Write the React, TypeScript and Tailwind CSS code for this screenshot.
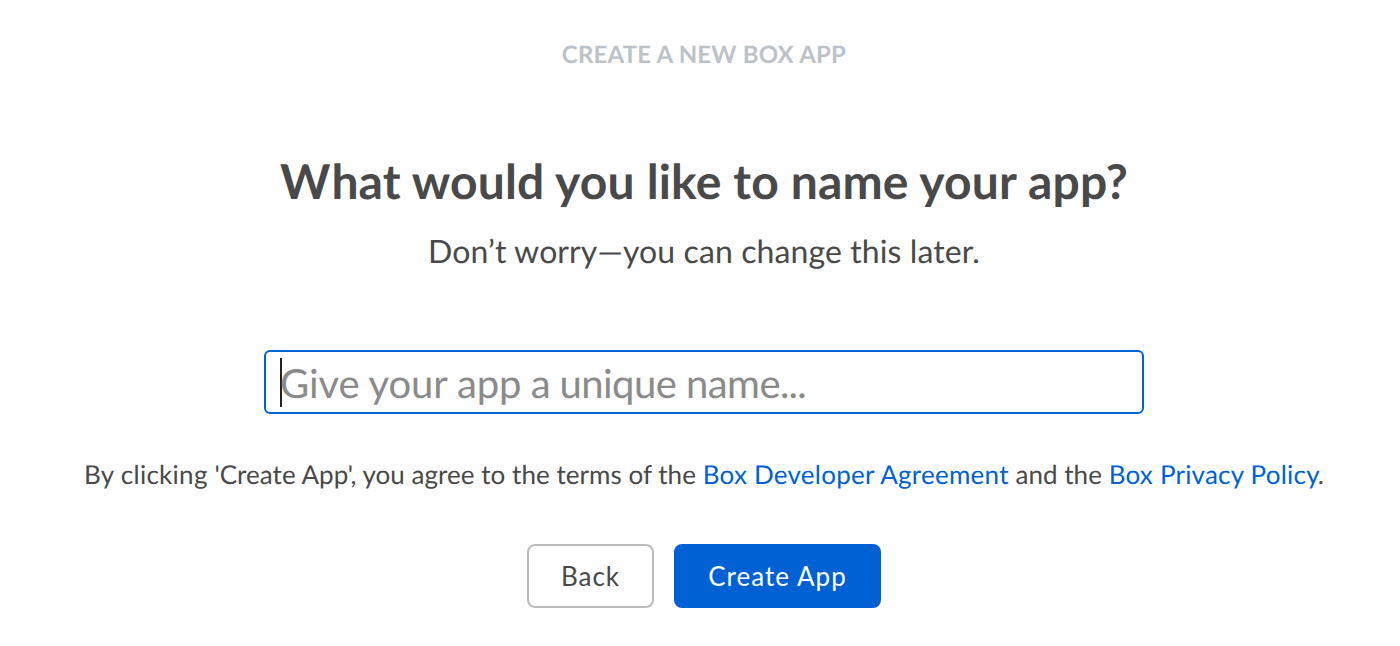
export default function App() {
  return (
    <main className="flex h-[646px] w-[1400px] flex-col items-center overflow-hidden bg-white pl-2 font-['Lato',sans-serif] text-[#494949] [text-rendering:geometricPrecision]">
      <p className="mt-[40px] text-[24px] leading-[30px] font-bold tracking-[0.2px] whitespace-nowrap text-[#bcc3c8]">CREATE A NEW BOX APP</p>
      <h1 className="mt-[82px] text-[48px] leading-[60px] font-bold tracking-[0.17px] whitespace-nowrap">
        <span className="tracking-[1px]">W</span>hat would you like to name your app?
      </h1>
      <p className="mt-[19px] text-[32px] leading-[40px] tracking-[0.1px] whitespace-nowrap">Don’t worry—you can change this later.</p>
      <div className="mt-[79px] flex h-[64px] w-[880px] items-center rounded-[6px] border-2 border-[#0061d5] px-[14px]">
        <span className="mt-px h-[49px] w-[2px] bg-[#222]" />
        <span className="mt-[2px] -ml-[2px] text-[40px] leading-[48px] whitespace-nowrap text-[#8a8a8a]">
          <span className="tracking-[-0.12px]">Give your app</span>
          <span className="tracking-[-0.7px]"> a </span>
          <span className="tracking-[-0.55px]">unique name</span>
          <span className="tracking-[-0.8px]">...</span>
        </span>
      </div>
      <p className="mt-[44px] text-[26px] leading-[32px] tracking-[0.04px] whitespace-nowrap">
        <span className="tracking-[0.28px]">By clicking</span> 'Create App', you agree to the terms of the{' '}
        <a className="tracking-[0.25px] text-[#0061d5]">Box Developer Agreement</a> and the{' '}
        <a className="tracking-[0.22px] text-[#0061d5]">Box Privacy Policy</a>
        <span className="-ml-[2px]">.</span>
      </p>
      <div className="mt-[54px] flex gap-[20px]">
        <button className="h-[64px] w-[127px] rounded-[8px] border-2 border-[#bcbcbc] text-[26px] tracking-[1px]">Back</button>
        <button className="h-[64px] w-[207px] rounded-[8px] bg-[#0061d5] text-[26px] tracking-[1.05px] text-white">Create App</button>
      </div>
    </main>
  );
}
